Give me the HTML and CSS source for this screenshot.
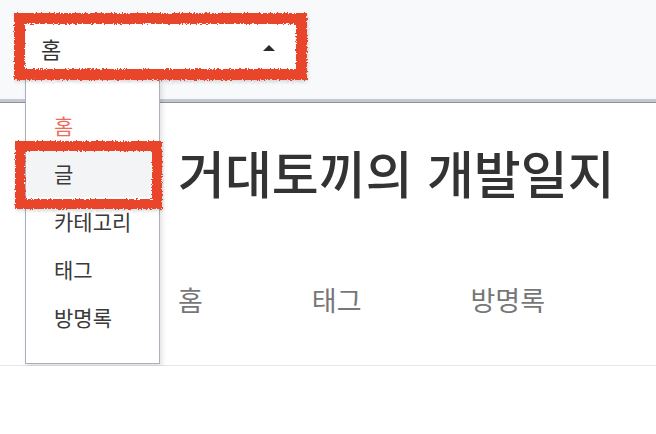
FILE: index.html
```html
<!DOCTYPE html>
<html lang="ko">
<head>
    <meta charset="UTF-8">
    <meta name="viewport" content="width=device-width, initial-scale=1.0">
    <title>거대토끼의 개발일지</title>
    <link rel="stylesheet" href="styles.css">
</head>
<body>

<svg class="defs" width="0" height="0">
    <filter id="rough">
        <feTurbulence type="fractalNoise" baseFrequency="0.6" numOctaves="2" seed="3"/>
        <feDisplacementMap in="SourceGraphic" scale="4"/>
    </filter>
</svg>

<div class="topbar">
    <div class="select">
        <span class="select-value">홈</span>
        <span class="caret"></span>
        <div class="mark mark-select"></div>

        <ul class="dropdown">
            <li class="active">홈</li>
            <li class="hover">글<div class="mark mark-item"></div></li>
            <li>카테고리</li>
            <li>태그</li>
            <li>방명록</li>
        </ul>
    </div>
</div>

<div class="page">
    <h1 class="title">거대토끼의 개발일지</h1>
    <nav class="nav">
        <a href="#">홈</a>
        <a href="#">태그</a>
        <a href="#">방명록</a>
    </nav>
</div>

</body>
</html>
```

FILE: styles.css
```css
body {
    margin: 0;
    font-family: "Noto Sans CJK KR", "Noto Sans", sans-serif;
    background-color: #fff;
    color: #333;
}
.defs {
    position: absolute;
}
.topbar {
    height: 102px;
    background-color: #f8f9fb;
    border-bottom: 3px solid #c4c8d0;
    box-shadow: 0 1px 0 #8d939d;
    padding: 24px 0 0 26px;
    box-sizing: border-box;
}
.select {
    position: relative;
    width: 268px;
    height: 47px;
    background-color: #fff;
    display: flex;
    align-items: center;
    justify-content: space-between;
    padding: 0 19px 0 15px;
    box-sizing: border-box;
}
.select-value {
    font-size: 22px;
    line-height: 1;
}
.caret {
    width: 0;
    height: 0;
    border-left: 6px solid transparent;
    border-right: 6px solid transparent;
    border-bottom: 6px solid #2b2b2b;
}
.dropdown {
    position: absolute;
    left: -1px;
    top: 54px;
    width: 135px;
    height: 286px;
    margin: 0;
    padding: 22px 0 0;
    list-style: none;
    background-color: #fff;
    border: 1px solid #a9afbc;
    box-sizing: border-box;
    box-shadow: 2px 3px 5px rgba(0, 0, 0, 0.12);
    z-index: 2;
}
.dropdown li {
    position: relative;
    height: 48px;
    line-height: 48px;
    padding-left: 28px;
    font-size: 21px;
    color: #3a3a3a;
}
.dropdown li.active {
    color: #f2695a;
}
.dropdown li.hover {
    background-color: #f3f4f6;
}
.mark {
    position: absolute;
    border: 11px solid #e9442b;
    filter: url(#rough);
    box-shadow: 1px 2px 3px rgba(0, 0, 0, 0.15);
    pointer-events: none;
    z-index: 3;
}
.mark-select {
    left: -12px;
    top: -11px;
    right: -13px;
    bottom: -9px;
}
.mark-item {
    left: -11px;
    top: -8px;
    width: 127px;
    height: 48px;
    border-width: 10px;
}
.page {
    padding-left: 178px;
    border-bottom: 1px solid #e6e6e6;
    padding-bottom: 49px;
}
.title {
    margin: 0;
    padding-top: 40px;
    font-size: 51px;
    line-height: 60px;
    font-weight: 500;
    color: #333;
}
.nav {
    display: flex;
    gap: 109px;
    margin-top: 82px;
}
.nav a {
    font-size: 27px;
    line-height: 32px;
    color: #777;
    text-decoration: none;
}
```
